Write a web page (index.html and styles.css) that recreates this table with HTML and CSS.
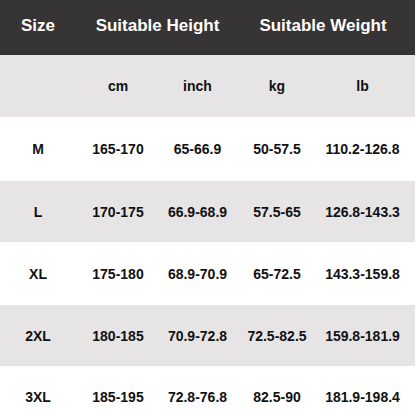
FILE: index.html
```html
<!DOCTYPE html>
<html>
<head>
<meta charset="utf-8">
<link rel="stylesheet" href="styles.css">
</head>
<body>
<div class="chart">
  <div class="head">
    <div>Size</div>
    <div>Suitable Height</div>
    <div>Suitable Weight</div>
  </div>
  <div class="row units">
    <div></div><div>cm</div><div>inch</div><div>kg</div><div>lb</div>
  </div>
  <div class="row">
    <div>M</div><div>165-170</div><div>65-66.9</div><div>50-57.5</div><div>110.2-126.8</div>
  </div>
  <div class="row alt">
    <div>L</div><div>170-175</div><div>66.9-68.9</div><div>57.5-65</div><div>126.8-143.3</div>
  </div>
  <div class="row">
    <div>XL</div><div>175-180</div><div>68.9-70.9</div><div>65-72.5</div><div>143.3-159.8</div>
  </div>
  <div class="row alt">
    <div>2XL</div><div>180-185</div><div>70.9-72.8</div><div>72.5-82.5</div><div>159.8-181.9</div>
  </div>
  <div class="row">
    <div>3XL</div><div>185-195</div><div>72.8-76.8</div><div>82.5-90</div><div>181.9-198.4</div>
  </div>
</div>
</body>
</html>
```
FILE: styles.css
```css
html, body {
  margin: 0;
  padding: 0;
  background: #ffffff;
  overflow: hidden;
}
.chart {
  width: 415px;
  font-family: "Liberation Sans", Arial, sans-serif;
  font-weight: bold;
}
.head {
  display: grid;
  grid-template-columns: 76px 163px 168px;
  height: 55px;
  padding-bottom: 3px;
  box-sizing: border-box;
  align-items: center;
  background: #363435;
  color: #ffffff;
  font-size: 17px;
  text-align: center;
}
.row {
  display: grid;
  grid-template-columns: 76px 84px 75px 84px 87px;
  height: 62px;
  align-items: center;
  text-align: center;
  font-size: 14px;
  color: #111111;
  background: #ffffff;
}
.row.units, .row.alt {
  background: #e6e4e5;
}
.row:nth-child(3) { height: 64px; }
.row:nth-child(4) { height: 61px; }
.row:nth-child(5) { height: 63px; }
.row:nth-child(6) { height: 61px; }
```
